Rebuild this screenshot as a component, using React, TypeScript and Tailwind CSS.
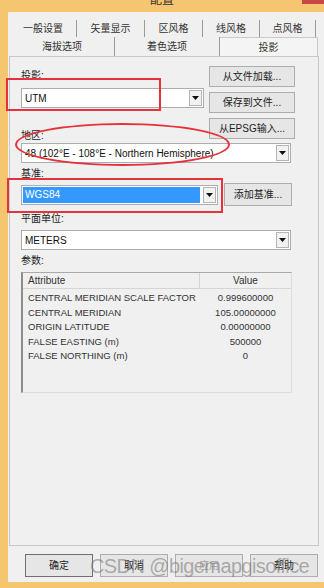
import React from "react";

const params = [
  { name: "CENTRAL MERIDIAN SCALE FACTOR", value: "0.999600000" },
  { name: "CENTRAL MERIDIAN", value: "105.00000000" },
  { name: "ORIGIN LATITUDE", value: "0.00000000" },
  { name: "FALSE EASTING (m)", value: "500000" },
  { name: "FALSE NORTHING (m)", value: "0" },
];

function DropButton() {
  return (
    <div className="w-[13px] h-[16px] mr-[1px] border border-[#b5b5b5] bg-[#f2f2f2] flex items-center justify-center">
      <svg width="7" height="4" viewBox="0 0 7 4">
        <path d="M0 0 L7 0 L3.5 4 Z" fill="#111" />
      </svg>
    </div>
  );
}

function Combo({ value, className, selected }: { value: string; className: string; selected?: boolean }) {
  return (
    <div className={`h-[20px] flex items-center bg-white border border-[#abadb3] ${className}`}>
      <div className="flex-1 h-full p-[1px] flex items-center min-w-0">
        <div
          className={`h-full flex-1 flex items-center pl-[2px] whitespace-nowrap overflow-hidden ${
            selected ? "bg-[#3399ff] text-white mr-[2px]" : "text-[#111]"
          }`}
        >
          {value}
        </div>
      </div>
      <DropButton />
    </div>
  );
}

function Btn({ label, className, disabled, isDefault }: { label: string; className: string; disabled?: boolean; isDefault?: boolean }) {
  return (
    <div
      className={`flex items-center justify-center bg-[#e6e6e6] border ${
        isDefault ? "border-[#6f6f6f]" : "border-[#adadad]"
      } ${disabled ? "text-[#a3a3a3]" : "text-[#222]"} ${className}`}
    >
      {label}
    </div>
  );
}

function Label({ text, className }: { text: string; className?: string }) {
  return <div className={`h-[12px] leading-[12px] text-[#222] ${className ?? ""}`}>{text}</div>;
}

export default function App() {
  return (
    <div className="relative w-[324px] h-[588px] overflow-hidden bg-[#f5c66f] flex flex-col text-[10px] font-['Liberation_Sans','Noto_Sans_CJK_SC',sans-serif]">
      {/* title bar */}
      <div className="relative h-[12px] flex justify-center shrink-0">
        <div className="-mt-[6px] text-[12px] leading-[12px] text-[#333]">配置</div>
        <div className="absolute right-0 top-0 w-[22px] h-[4px] bg-[#c8484a]" />
      </div>

      <div className="ml-[8px] h-[570px] bg-[#f0f0f0] flex flex-col">
        {/* back tab row */}
        <div className="mt-[8px] h-[17px] flex ml-[2px] text-[#333]">
          {[
            ["一般设置", "w-[67px]"],
            ["矢量显示", "w-[68px]"],
            ["区风格", "w-[58px]"],
            ["线风格", "w-[57px]"],
            ["点风格", "w-[56px]"],
          ].map(([t, w]) => (
            <div key={t} className={`${w} h-full flex items-center justify-center border-r border-[#9a9a9a]`}>
              {t}
            </div>
          ))}
        </div>
        {/* front tab row */}
        <div className="h-[19px] flex ml-[2px] text-[#333]">
          <div className="w-[105px] h-full flex items-center justify-center border-r border-[#9a9a9a]">海拔选项</div>
          <div className="w-[105px] h-full flex items-center justify-center border-r border-[#9a9a9a]">着色选项</div>
          <div className="w-[98px] h-full flex items-center justify-center border-t border-r border-[#c9c9c9] bg-[#f4f4f4]">投影</div>
        </div>

        {/* tab panel */}
        <div className="ml-[1px] w-[310px] h-[490px] border border-[#c9c9c9] flex flex-col px-[11px]">
          <div className="flex gap-[5px] items-start">
            <div className="w-[183px] flex flex-col pt-[13px]">
              <Label text="投影:" />
              <Combo value="UTM" className="w-[183px] mt-[6px]" />
              <Label text="地区:" className="mt-[22px]" />
            </div>
            <div className="w-[86px] flex flex-col pt-[9px] gap-[5px]">
              <Btn label="从文件加载..." className="h-[21px]" />
              <Btn label="保存到文件..." className="h-[21px]" />
              <Btn label="从EPSG输入..." className="h-[21px]" />
            </div>
          </div>
          <Combo value="48 (102°E - 108°E - Northern Hemisphere)" className="w-[270px] mt-[1px]" />

          <Label text="基准:" className="mt-[5px]" />
          <div className="flex items-center gap-[6px] mt-[3px]">
            <Combo value="WGS84" className="w-[197px]" selected />
            <Btn label="添加基准..." className="w-[68px] h-[23px]" />
          </div>

          <Label text="平面单位:" className="mt-[7px]" />
          <Combo value="METERS" className="w-[270px] mt-[5px]" />

          <Label text="参数:" className="mt-[5px]" />
          <div className="mt-[5px] w-[271px] h-[121px] border-l-2 border-t border-l-[#8d8d8d] border-t-[#a9a9a9] border-r border-b border-r-[#dcdcdc] border-b-[#dcdcdc] flex flex-col text-[#333]">
            <div className="h-[16px] flex border-b border-[#d5d5d5] shrink-0">
              <div className="w-[177px] pl-[5px] flex items-center border-r border-[#d5d5d5]">Attribute</div>
              <div className="flex-1 flex items-center justify-center">Value</div>
            </div>
            <div className="mt-[2px] flex flex-col text-[9.5px]">
              {params.map((p) => (
                <div key={p.name} className="h-[14.5px] flex items-center">
                  <div className="w-[177px] pl-[5px] whitespace-nowrap">{p.name}</div>
                  <div className="flex-1 text-center">{p.value}</div>
                </div>
              ))}
            </div>
          </div>
        </div>

        {/* dialog buttons */}
        <div className="mt-[8px] pl-[17px] flex gap-[7px]">
          <Btn label="确定" className="w-[68px] h-[23px]" isDefault />
          <Btn label="取消" className="w-[68px] h-[23px]" />
          <Btn label="应用" className="w-[68px] h-[23px]" disabled />
          <Btn label="帮助" className="w-[68px] h-[23px]" />
        </div>
      </div>

      {/* annotation marks */}
      <div className="absolute left-[6px] top-[78px] w-[155px] h-[33px] border-2 border-[#e6333b]" />
      <div className="absolute left-[15px] top-[123px] w-[215px] h-[43px] border-2 border-[#e6333b] rounded-[50%]" />
      <div className="absolute left-[7px] top-[178px] w-[216px] h-[35px] border-2 border-[#e6333b]" />

      {/* watermark */}
      <div className="absolute left-[90px] top-[556px] text-[20px] leading-[20px] tracking-[-0.6px] text-[#7d7d7d]/60 whitespace-nowrap">
        CSDN @bigemapgisoffice
      </div>
    </div>
  );
}
